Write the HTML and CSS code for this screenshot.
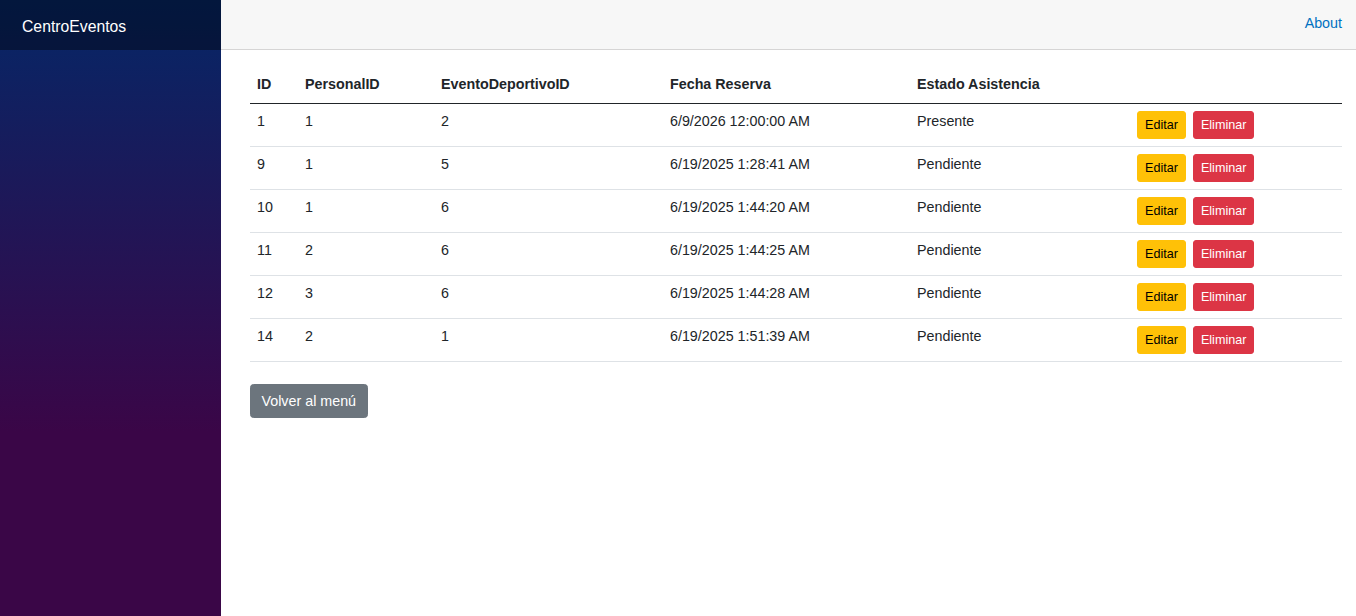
FILE: index.html
```html
<!DOCTYPE html>
<html lang="es">
<head>
<meta charset="utf-8">
<title>CentroEventos</title>
<link rel="stylesheet" href="styles.css">
</head>
<body>
<div class="page">
  <aside class="sidebar">
    <div class="brand-row"><a class="brand" href="#">CentroEventos</a></div>
  </aside>
  <main class="main">
    <div class="top-row"><a class="about" href="#">About</a></div>
    <article class="content">
      <table class="table">
        <thead>
          <tr>
            <th class="c-id">ID</th>
            <th class="c-per">PersonalID</th>
            <th class="c-ev">EventoDeportivoID</th>
            <th class="c-fe">Fecha Reserva</th>
            <th class="c-es">Estado Asistencia</th>
            <th class="c-ac"></th>
          </tr>
        </thead>
        <tbody>
          <tr><td>1</td><td>1</td><td>2</td><td>6/9/2026 12:00:00 AM</td><td>Presente</td><td><button class="btn-sm btn-warn">Editar</button><button class="btn-sm btn-danger">Eliminar</button></td></tr>
          <tr><td>9</td><td>1</td><td>5</td><td>6/19/2025 1:28:41 AM</td><td>Pendiente</td><td><button class="btn-sm btn-warn">Editar</button><button class="btn-sm btn-danger">Eliminar</button></td></tr>
          <tr><td>10</td><td>1</td><td>6</td><td>6/19/2025 1:44:20 AM</td><td>Pendiente</td><td><button class="btn-sm btn-warn">Editar</button><button class="btn-sm btn-danger">Eliminar</button></td></tr>
          <tr><td>11</td><td>2</td><td>6</td><td>6/19/2025 1:44:25 AM</td><td>Pendiente</td><td><button class="btn-sm btn-warn">Editar</button><button class="btn-sm btn-danger">Eliminar</button></td></tr>
          <tr><td>12</td><td>3</td><td>6</td><td>6/19/2025 1:44:28 AM</td><td>Pendiente</td><td><button class="btn-sm btn-warn">Editar</button><button class="btn-sm btn-danger">Eliminar</button></td></tr>
          <tr><td>14</td><td>2</td><td>1</td><td>6/19/2025 1:51:39 AM</td><td>Pendiente</td><td><button class="btn-sm btn-warn">Editar</button><button class="btn-sm btn-danger">Eliminar</button></td></tr>
        </tbody>
      </table>
      <button class="btn-secondary">Volver al menú</button>
    </article>
  </main>
</div>
</body>
</html>
```

FILE: styles.css
```css
html { font-size: 14px; }
* { box-sizing: border-box; }
body {
  margin: 0;
  font-family: "Liberation Sans", Arial, Helvetica, sans-serif;
  font-size: 14.3px;
  line-height: 21px;
  color: #212529;
  background: #fff;
}
.page {
  display: flex;
  min-height: 616px;
}
.sidebar {
  width: 221px;
  flex: 0 0 221px;
  background-image: linear-gradient(180deg, rgb(5, 39, 103) 0%, #3a0647 70%);
}
.brand-row {
  height: 50px;
  background-color: rgba(0, 0, 0, 0.4);
  display: flex;
  align-items: center;
  padding-left: 22px;
  padding-top: 3px;
}
.brand {
  color: #fff;
  text-decoration: none;
  font-size: 15.75px;
  line-height: 24px;
}
.main {
  flex: 1;
  display: flex;
  flex-direction: column;
}
.top-row {
  height: 50px;
  background-color: #f7f7f7;
  border-bottom: 1px solid #d6d5d5;
  display: flex;
  align-items: center;
  justify-content: flex-end;
  padding: 0 14px 0 29px;
}
.about {
  color: #0071c1;
  text-decoration: none;
  margin-top: -2px;
}
.content {
  padding: 17px 14px 0 29px;
}
.table {
  width: 100%;
  border-collapse: collapse;
  margin-bottom: 22px;
  color: #212529;
}
.table th, .table td {
  padding: 7px;
  text-align: left;
  vertical-align: top;
}
.table thead th {
  font-weight: bold;
  padding-bottom: 8px;
}
.table thead tr {
  border-bottom: 1px solid #212529;
}
.table tbody tr {
  border-bottom: 1px solid #dee2e6;
}
.c-id { width: 48px; }
.c-per { width: 136px; }
.c-ev { width: 229px; }
.c-fe { width: 247px; }
.c-es { width: 220px; }
.btn-sm {
  font-family: inherit;
  font-size: 12.6px;
  line-height: 18px;
  padding: 4px 7px;
  border: 1px solid transparent;
  border-radius: 3px;
  cursor: pointer;
  vertical-align: top;
}
.btn-warn {
  background-color: #ffc107;
  border-color: #ffc107;
  color: #000;
}
.btn-danger {
  background-color: #dc3545;
  border-color: #dc3545;
  color: #fff;
  margin-left: 7px;
}
.btn-secondary {
  font-family: inherit;
  font-size: 14.3px;
  line-height: 21px;
  padding: 5.5px 10.5px;
  border: 1px solid #6c757d;
  border-radius: 3.5px;
  background-color: #6c757d;
  color: #fff;
  cursor: pointer;
}
```
